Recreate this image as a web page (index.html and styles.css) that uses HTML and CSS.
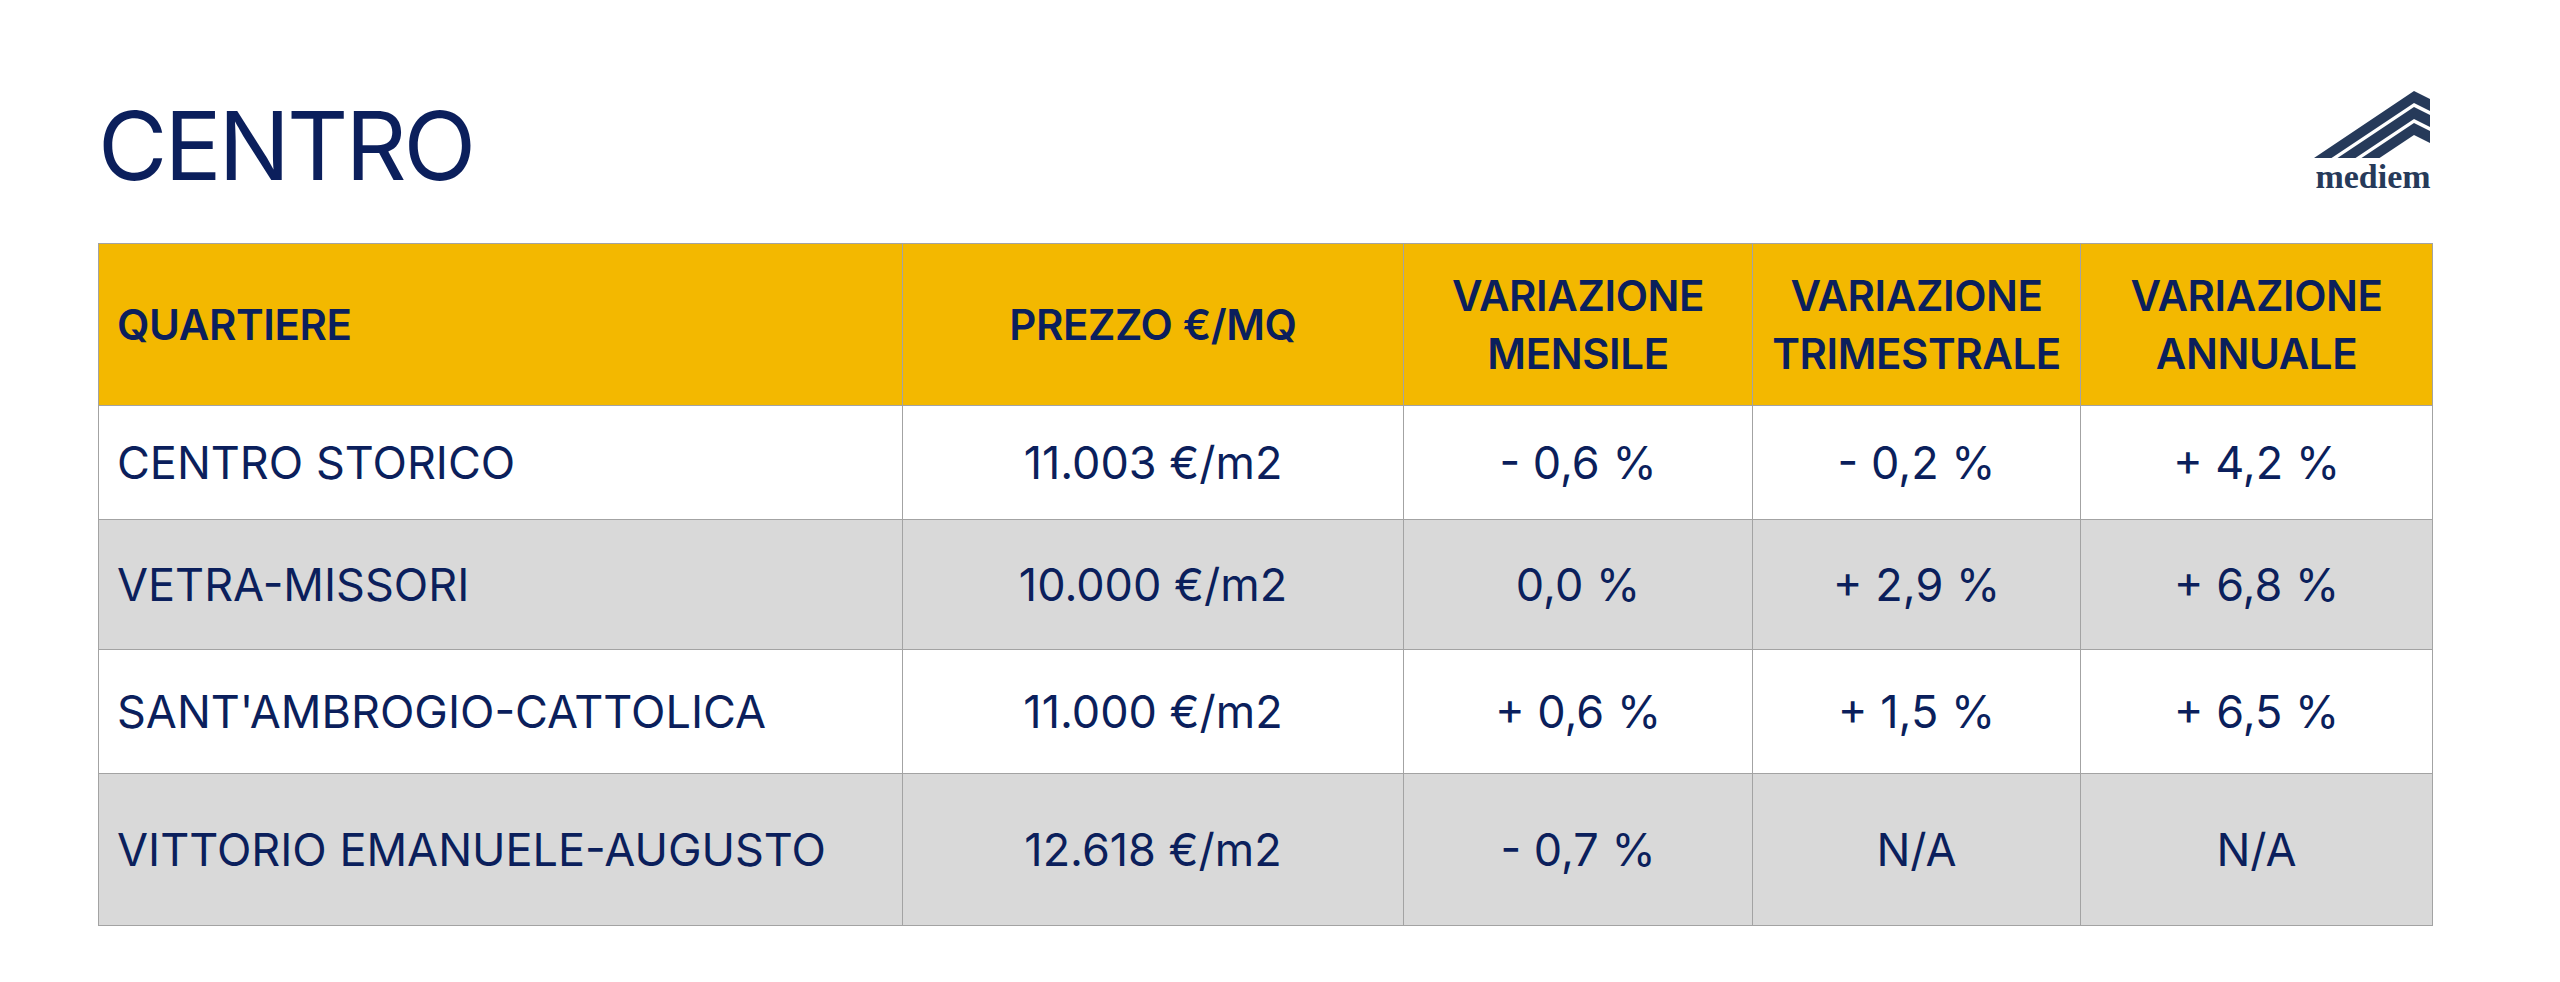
FILE: index.html
```html
<!DOCTYPE html>
<html lang="it">
<head>
<meta charset="utf-8">
<title>Centro</title>
<link rel="stylesheet" href="styles.css">
</head>
<body>
<div class="page">
  <header class="top">
    <h1 class="title">CENTRO</h1>
    <div class="logo">
      <svg class="roof" viewBox="0 0 116 67" width="116" height="67" aria-hidden="true">
        <polygon points="0,67 100,0 116,8 116,20 100,12 17.5,67"/>
        <polygon points="23.5,67 100,16 116,24 116,36 100,28 41.5,67"/>
        <polygon points="47.5,67 100,32 116,40 116,52 100,44 65.5,67"/>
      </svg>
      <div class="logo-text">mediem</div>
    </div>
  </header>
  <table class="prices">
    <colgroup>
      <col class="c1"><col class="c2"><col class="c3"><col class="c4"><col class="c5">
    </colgroup>
    <thead>
      <tr class="head">
        <th class="left">QUARTIERE</th>
        <th>PREZZO €/MQ</th>
        <th>VARIAZIONE<br>MENSILE</th>
        <th>VARIAZIONE<br>TRIMESTRALE</th>
        <th>VARIAZIONE<br>ANNUALE</th>
      </tr>
    </thead>
    <tbody>
      <tr class="r1">
        <td class="left">CENTRO STORICO</td>
        <td>11.003 €/m2</td>
        <td>- 0,6 %</td>
        <td>- 0,2 %</td>
        <td>+ 4,2 %</td>
      </tr>
      <tr class="r2 alt">
        <td class="left">VETRA-MISSORI</td>
        <td>10.000 €/m2</td>
        <td>0,0 %</td>
        <td>+ 2,9 %</td>
        <td>+ 6,8 %</td>
      </tr>
      <tr class="r3">
        <td class="left">SANT'AMBROGIO-CATTOLICA</td>
        <td>11.000 €/m2</td>
        <td>+ 0,6 %</td>
        <td>+ 1,5 %</td>
        <td>+ 6,5 %</td>
      </tr>
      <tr class="r4 alt">
        <td class="left">VITTORIO EMANUELE-AUGUSTO</td>
        <td>12.618 €/m2</td>
        <td>- 0,7 %</td>
        <td>N/A</td>
        <td>N/A</td>
      </tr>
    </tbody>
  </table>
</div>
</body>
</html>
```
FILE: styles.css
```css
html, body {
  margin: 0;
  padding: 0;
  background: #ffffff;
}

body {
  font-family: Inter, "Noto Sans", "Liberation Sans", sans-serif;
  color: #0b1f5c;
}

.page {
  padding: 91px 128px 0 98px;
}

.top {
  display: flex;
  justify-content: space-between;
  align-items: flex-start;
}

.title {
  margin: 7px 0 0 0;
  font-size: 95px;
  line-height: 95px;
  font-weight: 400;
  letter-spacing: -3px;
  color: #0b1f5c;
}

.logo {
  width: 118px;
  display: flex;
  flex-direction: column;
  align-items: center;
  color: #263a5a;
}

.roof {
  display: block;
  align-self: flex-start;
  fill: #263a5a;
}

.logo-text {
  margin-top: 2px;
  font-family: "Liberation Serif", "DejaVu Serif", serif;
  font-weight: 700;
  font-size: 34px;
  line-height: 34px;
  letter-spacing: 0;
  color: #263a5a;
}

.prices {
  margin-top: 49px;
  width: 2334px;
  border-collapse: collapse;
  table-layout: fixed;
}

.c1 { width: 804px; }
.c2 { width: 501px; }
.c3 { width: 349px; }
.c4 { width: 328px; }
.c5 { width: 352px; }

.prices th,
.prices td {
  border: 1px solid #a3a3a3;
  text-align: center;
  vertical-align: middle;
  padding: 0 10px;
  color: #0b1f5c;
}

.prices th {
  background: #f3b800;
  font-size: 42px;
  line-height: 58px;
  font-weight: 600;
  letter-spacing: -0.4px;
}

.prices td {
  background: #ffffff;
  font-size: 45px;
  line-height: 54px;
  font-weight: 400;
}

.prices .alt td {
  background: #d9d9d9;
}

.prices .left {
  text-align: left;
  padding-left: 18px;
}

.head { height: 162px; }
.r1 { height: 114px; }
.r2 { height: 130px; }
.r3 { height: 124px; }
.r4 { height: 152px; }
```
